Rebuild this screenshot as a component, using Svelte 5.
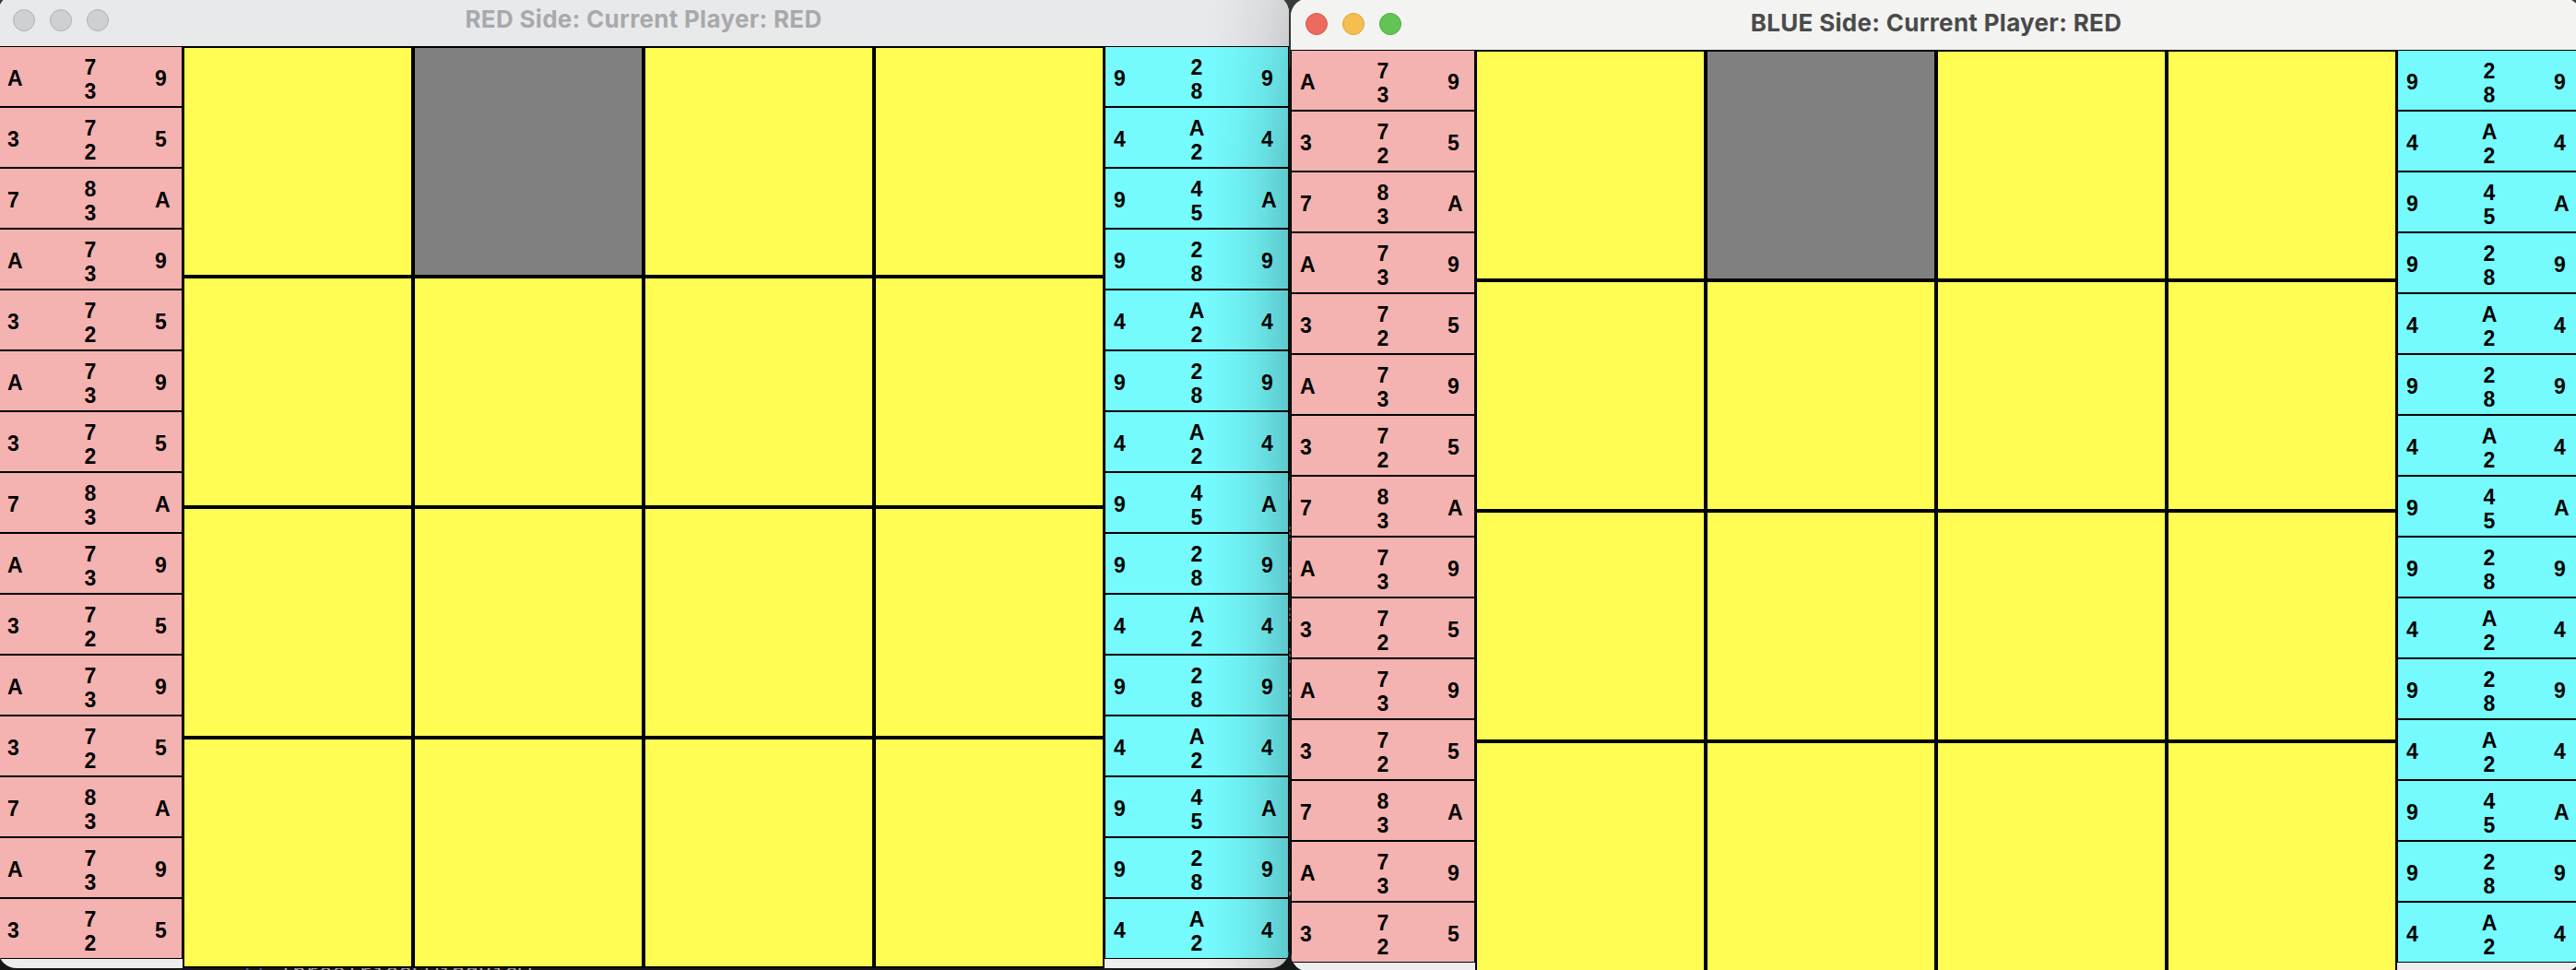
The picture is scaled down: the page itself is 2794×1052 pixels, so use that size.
<script>
  // Each card lists its values in the order left, top, bottom, right.
  const parse = (hand) => hand.split(' ').map((card) => card.split(''));
  const redHand = parse('A739 3725 783A A739 3725 A739 3725 783A A739 3725 A739 3725 783A A739 3725');
  const blueHand = parse('9289 4A24 945A 9289 4A24 9289 4A24 945A 9289 4A24 9289 4A24 945A 9289 4A24');
  const cells = Array.from({ length: 16 }, (_, i) => i === 1);
  const windows = [
    { side: 'red', title: 'RED Side: Current Player: RED' },
    { side: 'blue', title: 'BLUE Side: Current Player: RED' }
  ];
  const marks = [571, 577, 584, 615, 621, 628, 659, 665, 671, 703, 709, 716];
</script>

{#snippet hand(cards, color)}
  <div class="hand {color}">
    {#each cards as card}
      <div class="card">
        <span class="west">{card[0]}</span>
        <span class="middle"><span>{card[1]}</span><span>{card[2]}</span></span>
        <span class="east">{card[3]}</span>
      </div>
    {/each}
  </div>
{/snippet}

<main class="desktop">
  <div class="editor"><span class="ref">//</span>ThreeTriosSwingView</div>
  <svg class="gutter" width="4" height="1052" viewBox="0 0 4 1052">
    <rect x="1" y="522" width="1" height="20" fill="#55565a" />
    {#each marks as y}
      <rect x="1" {y} width="2" height="3" fill="#5a453b" />
    {/each}
    <rect x="1" y="747" width="2" height="3" fill="#5d5e60" />
    <rect x="1" y="753" width="2" height="3" fill="#5d5e60" />
    <rect x="1" y="967" width="2" height="4" fill="#5d5e60" />
  </svg>
  {#each windows as w}
    <section class="window {w.side}-side">
      <header>
        <div class="lights"><i></i><i></i><i></i></div>
        <h1>{w.title}</h1>
      </header>
      <div class="game">
        {@render hand(redHand, 'pink')}
        <div class="board">
          {#each cells as hole}
            <div class="cell" class:hole></div>
          {/each}
        </div>
        {@render hand(blueHand, 'cyan')}
      </div>
    </section>
  {/each}
</main>

<style>
  :global(body) { margin: 0; overflow: hidden; background: #1c1c1e; }
  .desktop {
    position: relative;
    width: 2794px;
    height: 1052px;
    overflow: hidden;
    background: linear-gradient(#3a3b3d 0, #2a2b2d 70px, #101112 76px, #161719 100%);
    font-family: "Liberation Sans", Arial, sans-serif;
  }
  .editor {
    position: absolute;
    left: 260px;
    top: 1043px;
    font: 24px/26px "Liberation Mono", monospace;
    color: #a8a8a8;
    white-space: pre;
  }
  .ref { margin-right: 14px; color: #3c62a8; }
  .gutter { position: absolute; left: 1397px; top: 0; }
  .window {
    position: absolute;
    width: 1400px;
    height: 1056px;
    border-radius: 20px;
    overflow: hidden;
    background: #eee;
  }
  .red-side { left: -2px; top: -6px; }
  .blue-side { left: 1400px; top: -2px; }
  .red-side::after {
    content: "";
    position: absolute;
    inset: 0 0 0 auto;
    width: 90px;
    background: linear-gradient(to right, transparent, rgba(0, 0, 0, .04) 35%, rgba(0, 0, 0, .11) 70%, rgba(0, 0, 0, .2));
    -webkit-mask-image: linear-gradient(rgba(0, 0, 0, .45), #000 180px);
    mask-image: linear-gradient(rgba(0, 0, 0, .45), #000 180px);
  }
  header {
    position: relative;
    box-sizing: border-box;
    display: flex;
    align-items: center;
    justify-content: center;
    height: 56px;
    padding-bottom: 2px;
    background: #f3f3f1;
    color: #4a4a4a;
  }
  .red-side header { background: #e8e9eb; color: #a8a9ab; }
  h1 {
    margin: 0;
    font: 700 26px/32px Inter, sans-serif;
    letter-spacing: 0.3px;
    white-space: nowrap;
  }
  .lights { position: absolute; left: 16px; top: 16px; display: flex; gap: 16px; }
  .lights i {
    box-sizing: border-box;
    width: 24px;
    height: 24px;
    border: 1px solid #b0b1b2;
    border-radius: 50%;
    background: #cfd0d1;
  }
  .blue-side i:nth-child(1) { background: #ed6a5e; border-color: #d9564b; }
  .blue-side i:nth-child(2) { background: #f5bf4f; border-color: #d9a33c; }
  .blue-side i:nth-child(3) { background: #61c554; border-color: #4fa73f; }
  .game { display: flex; height: 1000px; }
  .hand { width: 200px; }
  .card {
    box-sizing: border-box;
    display: grid;
    grid-template-columns: 59px 80px 59px;
    height: 66px;
    border: 1px solid #000;
    font-size: 23px;
    font-weight: 700;
    line-height: 26px;
    color: #000;
  }
  .pink .card { background: #f4b2b0; }
  .cyan .card { background: #75fbfe; }
  .west { padding: 21px 0 0 9px; }
  .east { padding: 21px 0 0 30px; }
  .middle { display: flex; flex-direction: column; align-items: center; padding-top: 9px; }
  .board { display: grid; grid-template: repeat(4, 250px) / repeat(4, 250px); }
  .cell { border: 2px solid #000; background: #fffd54; }
  .hole { background: #808080; }
</style>
